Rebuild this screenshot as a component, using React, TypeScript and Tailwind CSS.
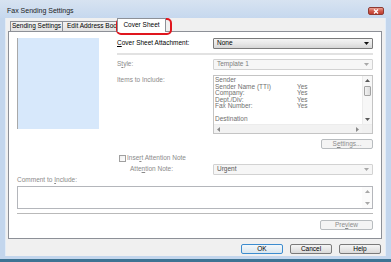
import React from "react";

const Tri = ({ dir = "down", color = "#000", w = 5, h = 3 }: { dir?: "down" | "up" | "left" | "right"; color?: string; w?: number; h?: number }) => {
  const d =
    dir === "down"
      ? `M0 0H${w}L${w / 2} ${h}Z`
      : dir === "up"
      ? `M0 ${h}H${w}L${w / 2} 0Z`
      : dir === "left"
      ? `M${w} 0V${h}L0 ${h / 2}Z`
      : `M0 0V${h}L${w} ${h / 2}Z`;
  return (
    <svg width={w} height={h} viewBox={`0 0 ${w} ${h}`} className="block">
      <path d={d} fill={color} />
    </svg>
  );
};

function Combo({ text, enabled, textColor }: { text: string; enabled?: boolean; textColor?: string }) {
  if (enabled) {
    return (
      <div className="w-[160px] h-[11px] border border-[#7a7a7a] rounded-[1px] bg-gradient-to-b from-[#f4f4f4] via-[#e8e8e8] to-[#d6d6d6] flex items-center pl-[3px] pr-[3px]">
        <span className="flex-1 text-black">{text}</span>
        <Tri color="#111" w={5} h={3} />
      </div>
    );
  }
  return (
    <div className="w-[160px] h-[11px] border border-[#d2d2d2] rounded-[1px] bg-[#f6f6f6] flex items-center pl-[3px] pr-[3px]">
      <span className={`flex-1 ${textColor ?? "text-[#7c7c7c]"}`}>{text}</span>
      <Tri color="#a8a8a8" w={5} h={3} />
    </div>
  );
}

function Btn({ children, w, kind }: { children: React.ReactNode; w: string; kind: "default" | "normal" | "disabled" }) {
  const base = "h-[10px] flex items-center justify-center rounded-[2px] border";
  const cls =
    kind === "default"
      ? "border-[#3c8ccf] bg-gradient-to-b from-[#f4f8fb] to-[#d9e6ef]"
      : kind === "normal"
      ? "border-[#7a7a7a] bg-gradient-to-b from-[#f6f6f6] to-[#dadada]"
      : "border-[#b8bcbf] bg-[#f4f4f4] text-[#8c8c8c]";
  return <div className={`${base} ${cls} ${w}`}>{children}</div>;
}

const listRows: [string, string][] = [
  ["Sender", ""],
  ["Sender Name (TTI)", "Yes"],
  ["Company:", "Yes"],
  ["Dept./Div:", "Yes"],
  ["Fax Number:", "Yes"],
  ["\u00a0", ""],
  ["Destination", ""],
];

export default function App() {
  return (
    <div className="relative w-[391px] h-[262px] overflow-hidden flex flex-col bg-[#c3d6ed] font-['Liberation_Sans',Arial,sans-serif] text-[6.5px] leading-none text-black">
      {/* Title bar */}
      <div className="h-[18px] flex items-start bg-gradient-to-b from-[#d7e3f1] to-[#c6d8ee]">
        <span className="mt-[7px] ml-[7px] text-[7px] leading-[8px] text-[#222]">Fax Sending Settings</span>
        <div className="ml-auto mt-[7px] mr-[7px] w-[16px] h-[8px] rounded-[2px] border border-[#8e3a32] bg-gradient-to-b from-[#e8a195] via-[#d0594b] to-[#c03c2d] flex items-center justify-center">
          <svg width="6" height="5" viewBox="0 0 6 5" className="block">
            <path d="M1 0.5L5 4.5M5 0.5L1 4.5" stroke="#fff" strokeWidth="1.3" />
          </svg>
        </div>
      </div>

      {/* Middle */}
      <div className="flex-1 flex min-h-0">
        <div className="w-[6px] border-r border-[#e2ecf7]" />
        <div className="flex-1 bg-[#f0f0f0] flex flex-col pl-[2px] pr-[3px]">
          {/* Tabs */}
          <div className="h-[13px] flex items-end pl-[2px]">
            <div className="w-[53px] h-[10px] border border-b-0 border-[#8d9097] bg-gradient-to-b from-[#f3f3f3] to-[#e2e2e2] flex items-center justify-center whitespace-nowrap">
              Sending Settings
            </div>
            <div className="-ml-px w-[57px] h-[10px] border border-b-0 border-[#8d9097] bg-gradient-to-b from-[#f3f3f3] to-[#e2e2e2] flex items-center pl-[4px] whitespace-nowrap overflow-hidden">
              Edit Address Book
            </div>
            <div className="relative z-10 -ml-[2px] -mb-px w-[49px] h-[14px] border border-b-0 border-[#8d9097] bg-white flex items-center justify-center whitespace-nowrap pb-[1px]">
              Cover Sheet
            </div>
          </div>

          {/* Panel */}
          <div className="h-[208px] border border-[#8d9097] bg-white flex flex-col pl-[8px] pr-[8px] pt-[6px]">
            <div className="flex gap-[18px]">
              <div className="w-[82px] h-[91px] shrink-0 bg-[#d7e8fb] border-l border-[#a9a9a9]" />
              <div className="w-[256px] flex flex-col">
                <div className="h-[11px] flex items-center">
                  <span className="w-[96px] text-black">
                    <span className="underline underline-offset-[1px]">C</span>over Sheet Attachment:
                  </span>
                  <Combo text="None" enabled />
                </div>
                <div className="mt-[4px] h-[2px] bg-[#e2e2e2]" />
                <div className="mt-[4px] h-[11px] flex items-center">
                  <span className="w-[96px] text-[#8a8a8a]">
                    S<span className="underline underline-offset-[1px]">t</span>yle:
                  </span>
                  <Combo text="Template 1" />
                </div>
                <div className="mt-[5px] flex items-start">
                  <span className="w-[96px] pt-[2px] text-[#8a8a8a]">Items to Include:</span>
                  <div className="w-[160px] h-[59px] border border-[#c4c4c4] bg-white flex flex-col">
                    <div className="flex-1 flex min-h-0">
                      <div className="flex-1 overflow-hidden pl-[1px] pt-[1.5px] text-[#6f6f6f]">
                        {listRows.map(([a, b], i) => (
                          <div key={i} className="flex h-[6.4px] items-center whitespace-nowrap">
                            <span className="w-[82px]">{a}</span>
                            <span>{b}</span>
                          </div>
                        ))}
                      </div>
                      <div className="w-[10px] flex flex-col bg-[#f7f7f7] border-l border-[#ececec]">
                        <div className="h-[9px] flex items-center justify-center">
                          <Tri dir="up" color="#5a5a5a" w={5} h={3} />
                        </div>
                        <div className="mt-[1px] mx-[1px] h-[10px] rounded-[1px] border border-[#a3a3a3] bg-gradient-to-r from-[#f2f2f2] to-[#dcdcdc]" />
                        <div className="flex-1" />
                        <div className="h-[9px] flex items-center justify-center">
                          <Tri dir="down" color="#5a5a5a" w={5} h={3} />
                        </div>
                      </div>
                    </div>
                    <div className="h-[9px] flex bg-[#f2f2f2] border-t border-[#ececec]">
                      <div className="w-[9px] flex items-center justify-center">
                        <Tri dir="left" color="#8a8a8a" w={3} h={5} />
                      </div>
                      <div className="flex-1" />
                      <div className="w-[9px] flex items-center justify-center">
                        <Tri dir="right" color="#8a8a8a" w={3} h={5} />
                      </div>
                      <div className="w-[10px] bg-[#f0f0f0]" />
                    </div>
                  </div>
                </div>
                <div className="mt-[5px] self-end">
                  <Btn w="w-[52px]" kind="disabled">
                    <span>
                      S<span className="underline underline-offset-[1px]">e</span>ttings...
                    </span>
                  </Btn>
                </div>
                <div className="mt-[6px] h-[7px] flex items-center pl-[2px] gap-[1px]">
                  <div className="w-[7px] h-[7px] border border-[#a0a0a0] bg-gradient-to-br from-[#f0f0f0] to-[#ffffff]" />
                  <span className="text-[#8a8a8a]">
                    Inse<span className="underline underline-offset-[1px]">r</span>t Attention Note
                  </span>
                </div>
                <div className="mt-[2px] h-[11px] flex items-center">
                  <span className="w-[96px] pl-[13px] text-[#8a8a8a]">
                    Atte<span className="underline underline-offset-[1px]">n</span>tion Note:
                  </span>
                  <Combo text="Urgent" textColor="text-[#555555]" />
                </div>
              </div>
            </div>

            <div className="mt-[2px] h-[7px] flex items-center text-[#8a8a8a]">
              <span>
                Comment to <span className="underline underline-offset-[1px]">I</span>nclude:
              </span>
            </div>
            <div className="mt-[2px] h-[23px] border border-[#b4b6bb] bg-white flex justify-end">
              <div className="w-[10px] flex flex-col justify-between py-[3px] items-center bg-[#fbfbfb]">
                <Tri dir="up" color="#a8a8a8" w={5} h={3} />
                <Tri dir="down" color="#a8a8a8" w={5} h={3} />
              </div>
            </div>
            <div className="mt-[4px] h-[1px] bg-[#b9b9b9]" />
            <div className="mt-[6px] self-end">
              <Btn w="w-[53px]" kind="disabled">
                <span>
                  Pre<span className="underline underline-offset-[1px]">v</span>iew
                </span>
              </Btn>
            </div>
          </div>

          {/* Buttons */}
          <div className="mt-[5px] flex justify-end gap-[7px] pr-[1px]">
            <Btn w="w-[42px]" kind="default">OK</Btn>
            <Btn w="w-[42px]" kind="normal">Cancel</Btn>
            <Btn w="w-[42px]" kind="normal">Help</Btn>
          </div>
        </div>
        <div className="w-[6px] border-l border-[#e2ecf7]" />
      </div>

      {/* Bottom frame */}
      <div className="h-[6px] flex flex-col">
        <div className="h-[3px]" />
        <div className="flex-1 bg-[#3d7393]" />
      </div>

      {/* Red annotation */}
      <div className="absolute left-[116px] top-[18px] w-[56px] h-[17px] border-2 border-[#e0161e] rounded-[5px]" />
    </div>
  );
}
